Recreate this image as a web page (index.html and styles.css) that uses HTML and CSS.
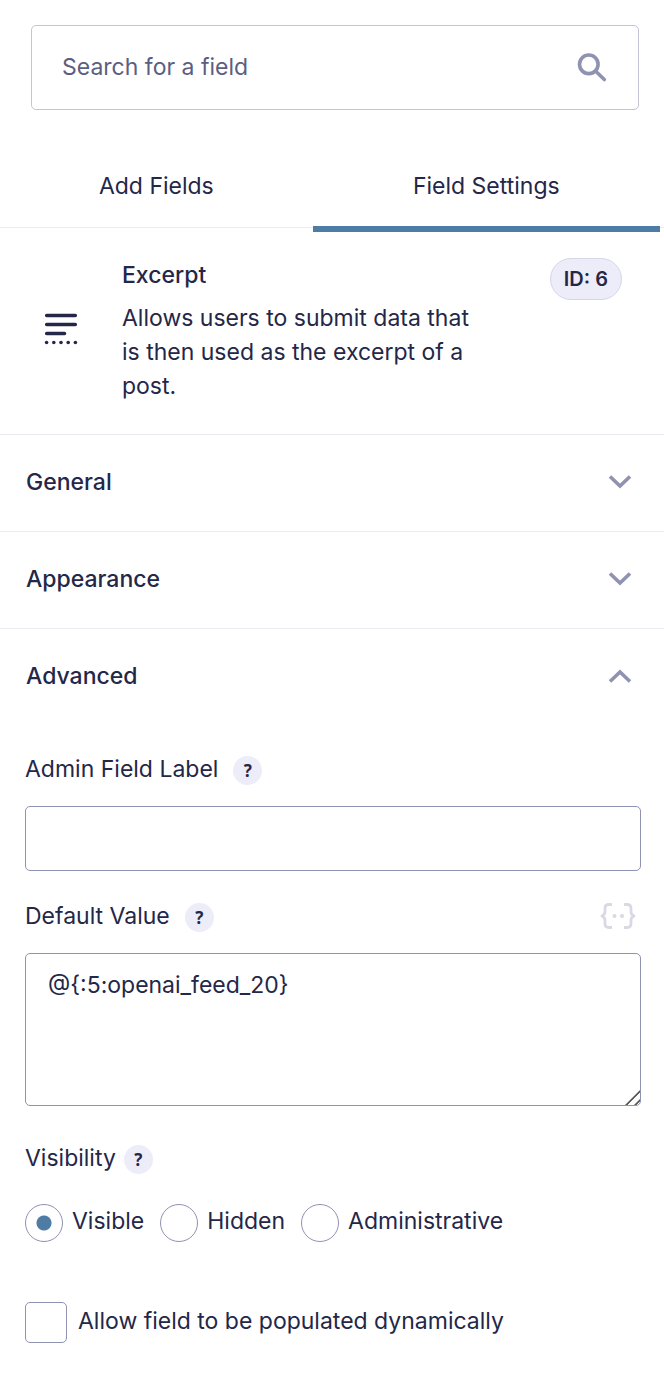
FILE: index.html
```html
<!DOCTYPE html>
<html lang="en">
<head>
<meta charset="utf-8">
<meta name="viewport" content="width=device-width, initial-scale=1">
<title>Field Settings</title>
<link rel="stylesheet" href="styles.css">
</head>
<body>
<main class="panel">
  <form class="search" role="search">
    <input class="search-input" type="search" placeholder="Search for a field" aria-label="Search for a field">
    <button class="icon-button" type="button" aria-label="Search">
      <svg width="32" height="32" viewBox="0 0 32 32" fill="none" stroke="#9092b2" aria-hidden="true">
        <circle cx="12.800" cy="12.300" r="9.300" stroke-width="3.600"/>
        <path d="M21 20.500L28.300 27.500" stroke-width="3.600" stroke-linecap="round"/>
      </svg>
    </button>
  </form>

  <div class="tabs" role="tablist">
    <button class="tab" type="button" role="tab" aria-selected="false">Add Fields</button>
    <button class="tab tab-active" type="button" role="tab" aria-selected="true">Field Settings</button>
  </div>

  <section class="field">
    <svg class="field-icon" width="34" height="34" viewBox="0 0 34 34" aria-hidden="true">
      <g fill="none" stroke="#242748" stroke-width="3.600" stroke-linecap="round">
        <path d="M2.700 3.500H31.300M2.700 12.500H31.300M2.700 21.500H20.500"/>
      </g>
      <g fill="#242748">
        <circle cx="2.600" cy="30.500" r="1.800"/><circle cx="9.800" cy="30.500" r="1.800"/><circle cx="17" cy="30.500" r="1.800"/><circle cx="24.200" cy="30.500" r="1.800"/><circle cx="31.400" cy="30.500" r="1.800"/>
      </g>
    </svg>
    <div class="field-text">
      <h2 class="field-title">Excerpt</h2>
      <p class="field-description">Allows users to submit data that is then used as the excerpt of a post.</p>
    </div>
    <span class="field-id">ID: 6</span>
  </section>

  <button class="section-toggle" type="button" aria-expanded="false">
    General
    <svg width="24" height="16" viewBox="0 0 24 16" fill="none" stroke="#9092b2" stroke-width="3.600" aria-hidden="true"><path d="M2 2.500L12 12L22 2.500"/></svg>
  </button>
  <button class="section-toggle" type="button" aria-expanded="false">
    Appearance
    <svg width="24" height="16" viewBox="0 0 24 16" fill="none" stroke="#9092b2" stroke-width="3.600" aria-hidden="true"><path d="M2 2.500L12 12L22 2.500"/></svg>
  </button>
  <button class="section-toggle" type="button" aria-expanded="true" aria-controls="advanced">
    Advanced
    <svg width="24" height="16" viewBox="0 0 24 16" fill="none" stroke="#9092b2" stroke-width="3.600" aria-hidden="true"><path d="M2 13.500L12 4L22 13.500"/></svg>
  </button>

  <div class="settings" id="advanced">
    <div class="setting">
      <div class="setting-head">
        <label for="admin-label">Admin Field Label</label>
        <button class="help" type="button" aria-label="About Admin Field Label">?</button>
      </div>
      <input class="text-input" id="admin-label" type="text">
    </div>

    <div class="setting">
      <div class="setting-head">
        <label for="default-value">Default Value</label>
        <button class="help" type="button" aria-label="About Default Value">?</button>
        <button class="icon-button merge-tags" type="button" aria-label="Insert merge tag">
          <svg width="36" height="28" viewBox="0 0 36 28" fill="none" stroke="#d9d9e6" stroke-width="2.800" stroke-linejoin="round" aria-hidden="true">
            <path d="M12 2.500H9Q5 2.500 5 6.500V10Q5 12.500 2 14Q5 15.500 5 18V21.500Q5 25.500 9 25.500H12M24 2.500H27Q31 2.500 31 6.500V10Q31 12.500 34 14Q31 15.500 31 18V21.500Q31 25.500 27 25.500H24"/>
            <g fill="#d9d9e6" stroke="none"><circle cx="14.500" cy="14" r="2"/><circle cx="22" cy="14" r="2"/></g>
          </svg>
        </button>
      </div>
      <textarea class="text-area" id="default-value">@{:5:openai_feed_20}</textarea>
    </div>

    <fieldset class="visibility">
      <legend class="visibility-head">
        <span>Visibility</span>
        <button class="help" type="button" aria-label="About Visibility">?</button>
      </legend>
      <div class="radios">
        <label class="choice"><input class="radio" type="radio" name="visibility" checked><span>Visible</span></label>
        <label class="choice"><input class="radio" type="radio" name="visibility"><span>Hidden</span></label>
        <label class="choice"><input class="radio" type="radio" name="visibility"><span>Administrative</span></label>
      </div>
    </fieldset>

    <label class="choice choice-box"><input class="checkbox" type="checkbox"><span>Allow field to be populated dynamically</span></label>
  </div>
</main>
</body>
</html>
```

FILE: styles.css
```css
* {
  box-sizing: border-box;
}

body {
  margin: 0;
  background: #fff;
  color: #242748;
  font-family: Inter, "Liberation Sans", sans-serif;
  font-size: 23px;
  line-height: 34px;
}

button,
input,
textarea {
  margin: 0;
  color: inherit;
  font: inherit;
}

button {
  padding: 0;
  border: 0;
  background: none;
  cursor: pointer;
}

svg {
  display: block;
}

.search {
  display: flex;
  align-items: center;
  height: 85px;
  margin: 25px 25px 0 31px;
  padding: 0 30px;
  border: 1px solid #c4c4d7;
  border-radius: 5px;
}

.search-input {
  flex: 1;
  min-width: 0;
  padding: 0 0 2px;
  border: 0;
  outline: 0;
  background: none;
  appearance: none;
}

.search-input::placeholder {
  color: #5b5e80;
  opacity: 1;
}

.icon-button {
  flex: none;
}

.tabs {
  display: flex;
  height: 118px;
  padding: 34px 4px 0 0;
  border-bottom: 1px solid #ebebf2;
}

.tab {
  flex: 9;
  height: 88px;
  padding-top: 1px;
  border-bottom: 6px solid transparent;
}

.tab-active {
  flex: 10;
  border-color: #4f7ca5;
}

.field {
  display: flex;
  align-items: flex-start;
  padding: 30px 42px 31px 44px;
}

.field-icon {
  flex: none;
  margin-top: 54px;
}

.field-text {
  flex: 1;
  margin-left: 44px;
}

.field-title {
  margin: 0 0 9px;
  font-size: 23px;
  font-weight: 500;
}

.field-description {
  max-width: 370px;
  margin: 0;
}

.field-id {
  flex: none;
  padding: 3px 13px;
  border: 1px solid #d5d7e9;
  border-radius: 21px;
  background: #ecedf8;
  font-size: 20px;
  font-weight: 600;
}

.section-toggle {
  display: flex;
  align-items: center;
  justify-content: space-between;
  width: 100%;
  height: 97px;
  padding: 0 32px 2px 26px;
  border-top: 1px solid #ebebf2;
  font-weight: 500;
}

.settings {
  padding: 27px 23px 44px 25px;
}

.setting {
  margin-bottom: 28px;
}

.setting-head {
  display: flex;
  align-items: center;
  gap: 15px;
  margin-bottom: 20px;
}

.help {
  width: 29px;
  height: 29px;
  margin-top: 2px;
  border-radius: 50%;
  background: #ecedf8;
  font-family: "Noto Sans", sans-serif;
  font-size: 17px;
  font-weight: 700;
  line-height: 29px;
}

.merge-tags {
  margin: 0 5px 0 auto;
}

.text-input,
.text-area {
  display: block;
  width: 100%;
  border: 1px solid #9092b2;
  border-radius: 5px;
  background: #fff;
}

.text-input {
  height: 65px;
  padding: 0 22px;
}

.text-area {
  height: 153px;
  padding: 14px 22px;
  resize: vertical;
}

.text-area::-webkit-scrollbar {
  width: 18px;
  height: 18px;
}

.text-area::-webkit-resizer {
  background: linear-gradient(135deg, transparent 46%, #555 48%, #555 53%, transparent 55%, transparent 74%, #555 76%, #555 81%, transparent 83%) 0 0 / 16px 16px no-repeat;
}

.visibility {
  min-width: 0;
  margin: 35px 0 0;
  padding: 0;
  border: 0;
}

.visibility-head {
  display: flex;
  align-items: center;
  gap: 8px;
  padding: 0;
}

.radios {
  display: flex;
  flex-wrap: wrap;
  gap: 16px;
  margin-top: 29px;
}

.choice {
  display: flex;
  align-items: center;
  gap: 9px;
}

.choice span {
  margin-bottom: 4px;
}

.choice-box {
  gap: 11px;
  margin-top: 60px;
}

.radio,
.checkbox {
  flex: none;
  border: 1px solid #9092b2;
  background: #fff;
  appearance: none;
}

.radio {
  width: 38px;
  height: 38px;
  border-radius: 50%;
}

.radio:checked {
  background: radial-gradient(circle, #4f7ca5 7px, #fff 8px);
}

.checkbox {
  width: 42px;
  height: 41px;
  border-radius: 5px;
}
```
